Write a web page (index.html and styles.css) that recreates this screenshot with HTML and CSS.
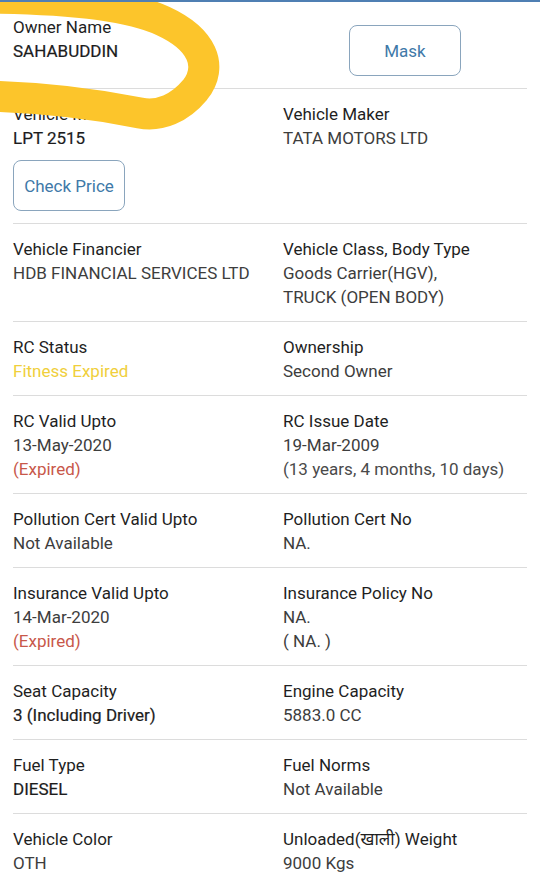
FILE: index.html
```html
<!DOCTYPE html>
<html>
<head>
<meta charset="utf-8">
<link rel="stylesheet" href="styles.css">
</head>
<body>
<div class="page">
  <div class="list">
    <div class="row">
      <div class="cell">
        <div class="label">Owner Name</div>
        <div class="value strong">SAHABUDDIN</div>
      </div>
      <div class="cell center">
        <button class="btn btn-top">Mask</button>
      </div>
    </div>
    <div class="row">
      <div class="cell">
        <div class="label">Vehicle Model</div>
        <div class="value strong">LPT 2515</div>
        <button class="btn btn-mid">Check Price</button>
      </div>
      <div class="cell">
        <div class="label">Vehicle Maker</div>
        <div class="value">TATA MOTORS LTD</div>
      </div>
    </div>
    <div class="row">
      <div class="cell">
        <div class="label">Vehicle Financier</div>
        <div class="value">HDB FINANCIAL SERVICES LTD</div>
      </div>
      <div class="cell">
        <div class="label">Vehicle Class, Body Type</div>
        <div class="value">Goods Carrier(HGV),</div>
        <div class="value">TRUCK (OPEN BODY)</div>
      </div>
    </div>
    <div class="row">
      <div class="cell">
        <div class="label">RC Status</div>
        <div class="value warn">Fitness Expired</div>
      </div>
      <div class="cell">
        <div class="label">Ownership</div>
        <div class="value">Second Owner</div>
      </div>
    </div>
    <div class="row">
      <div class="cell">
        <div class="label">RC Valid Upto</div>
        <div class="value">13-May-2020</div>
        <div class="value danger">(Expired)</div>
      </div>
      <div class="cell">
        <div class="label">RC Issue Date</div>
        <div class="value">19-Mar-2009</div>
        <div class="value muted">(13 years, 4 months, 10 days)</div>
      </div>
    </div>
    <div class="row">
      <div class="cell">
        <div class="label">Pollution Cert Valid Upto</div>
        <div class="value">Not Available</div>
      </div>
      <div class="cell">
        <div class="label">Pollution Cert No</div>
        <div class="value">NA.</div>
      </div>
    </div>
    <div class="row">
      <div class="cell">
        <div class="label">Insurance Valid Upto</div>
        <div class="value">14-Mar-2020</div>
        <div class="value danger">(Expired)</div>
      </div>
      <div class="cell">
        <div class="label">Insurance Policy No</div>
        <div class="value">NA.</div>
        <div class="value">( NA. )</div>
      </div>
    </div>
    <div class="row">
      <div class="cell">
        <div class="label">Seat Capacity</div>
        <div class="value strong">3 (Including Driver)</div>
      </div>
      <div class="cell">
        <div class="label">Engine Capacity</div>
        <div class="value">5883.0 CC</div>
      </div>
    </div>
    <div class="row">
      <div class="cell">
        <div class="label">Fuel Type</div>
        <div class="value strong">DIESEL</div>
      </div>
      <div class="cell">
        <div class="label">Fuel Norms</div>
        <div class="value">Not Available</div>
      </div>
    </div>
    <div class="row">
      <div class="cell">
        <div class="label">Vehicle Color</div>
        <div class="value">OTH</div>
      </div>
      <div class="cell">
        <div class="label">Unloaded(खाली) Weight</div>
        <div class="value">9000 Kgs</div>
      </div>
    </div>
  </div>
  <svg class="scribble" width="260" height="150" viewBox="0 0 260 150">
    <path d="M -30 -4 C 50 -4, 125 1, 163 19 C 202 37, 214 64, 195 88 C 180 106, 160 115, 140 111 C 95 102, 40 94, -30 94" fill="none" stroke="#fcc52b" stroke-width="31" stroke-linecap="round" stroke-linejoin="round"/>
  </svg>
</div>
</body>
</html>
```

FILE: styles.css
```css
html, body {
  margin: 0;
  padding: 0;
  background: #ffffff;
}
body {
  font-family: Roboto, "Noto Sans", "Liberation Sans", sans-serif;
  font-size: 17px;
  line-height: 24px;
  color: #222222;
  overflow: hidden;
}
.page {
  position: relative;
  width: 540px;
  height: 882px;
  overflow: hidden;
  border-top: 2px solid #4f7fb3;
  box-sizing: border-box;
}
.list {
  padding: 0 13px;
}
.row {
  display: grid;
  grid-template-columns: 270px 244px;
  padding: 13px 0 12px;
  border-bottom: 1px solid #dcdcdc;
}
.row:first-child {
  padding-top: 13px;
}
.cell {
  display: flex;
  flex-direction: column;
  align-items: flex-start;
}
.cell.center {
  align-items: center;
}
.label {
  color: #1f1f1f;
}
.value {
  color: #3d3d3d;
}
.value.strong {
  color: #1c1c1c;
  -webkit-text-stroke: 0.2px #1c1c1c;
}
.value.warn {
  color: #f0cf3c;
}
.value.danger {
  color: #c8584a;
}
.value.muted {
  color: #4a4a4a;
}
.btn {
  width: 112px;
  height: 51px;
  border: 1px solid #8aa5bd;
  border-radius: 8px;
  background: #ffffff;
  color: #4079a8;
  font-family: Roboto, "Noto Sans", "Liberation Sans", sans-serif;
  font-size: 17px;
  padding: 0;
}
.btn-top {
  margin-top: 10px;
}
.btn-mid {
  margin-top: 10px;
}
.scribble {
  position: absolute;
  left: 0;
  top: 0;
}
```
